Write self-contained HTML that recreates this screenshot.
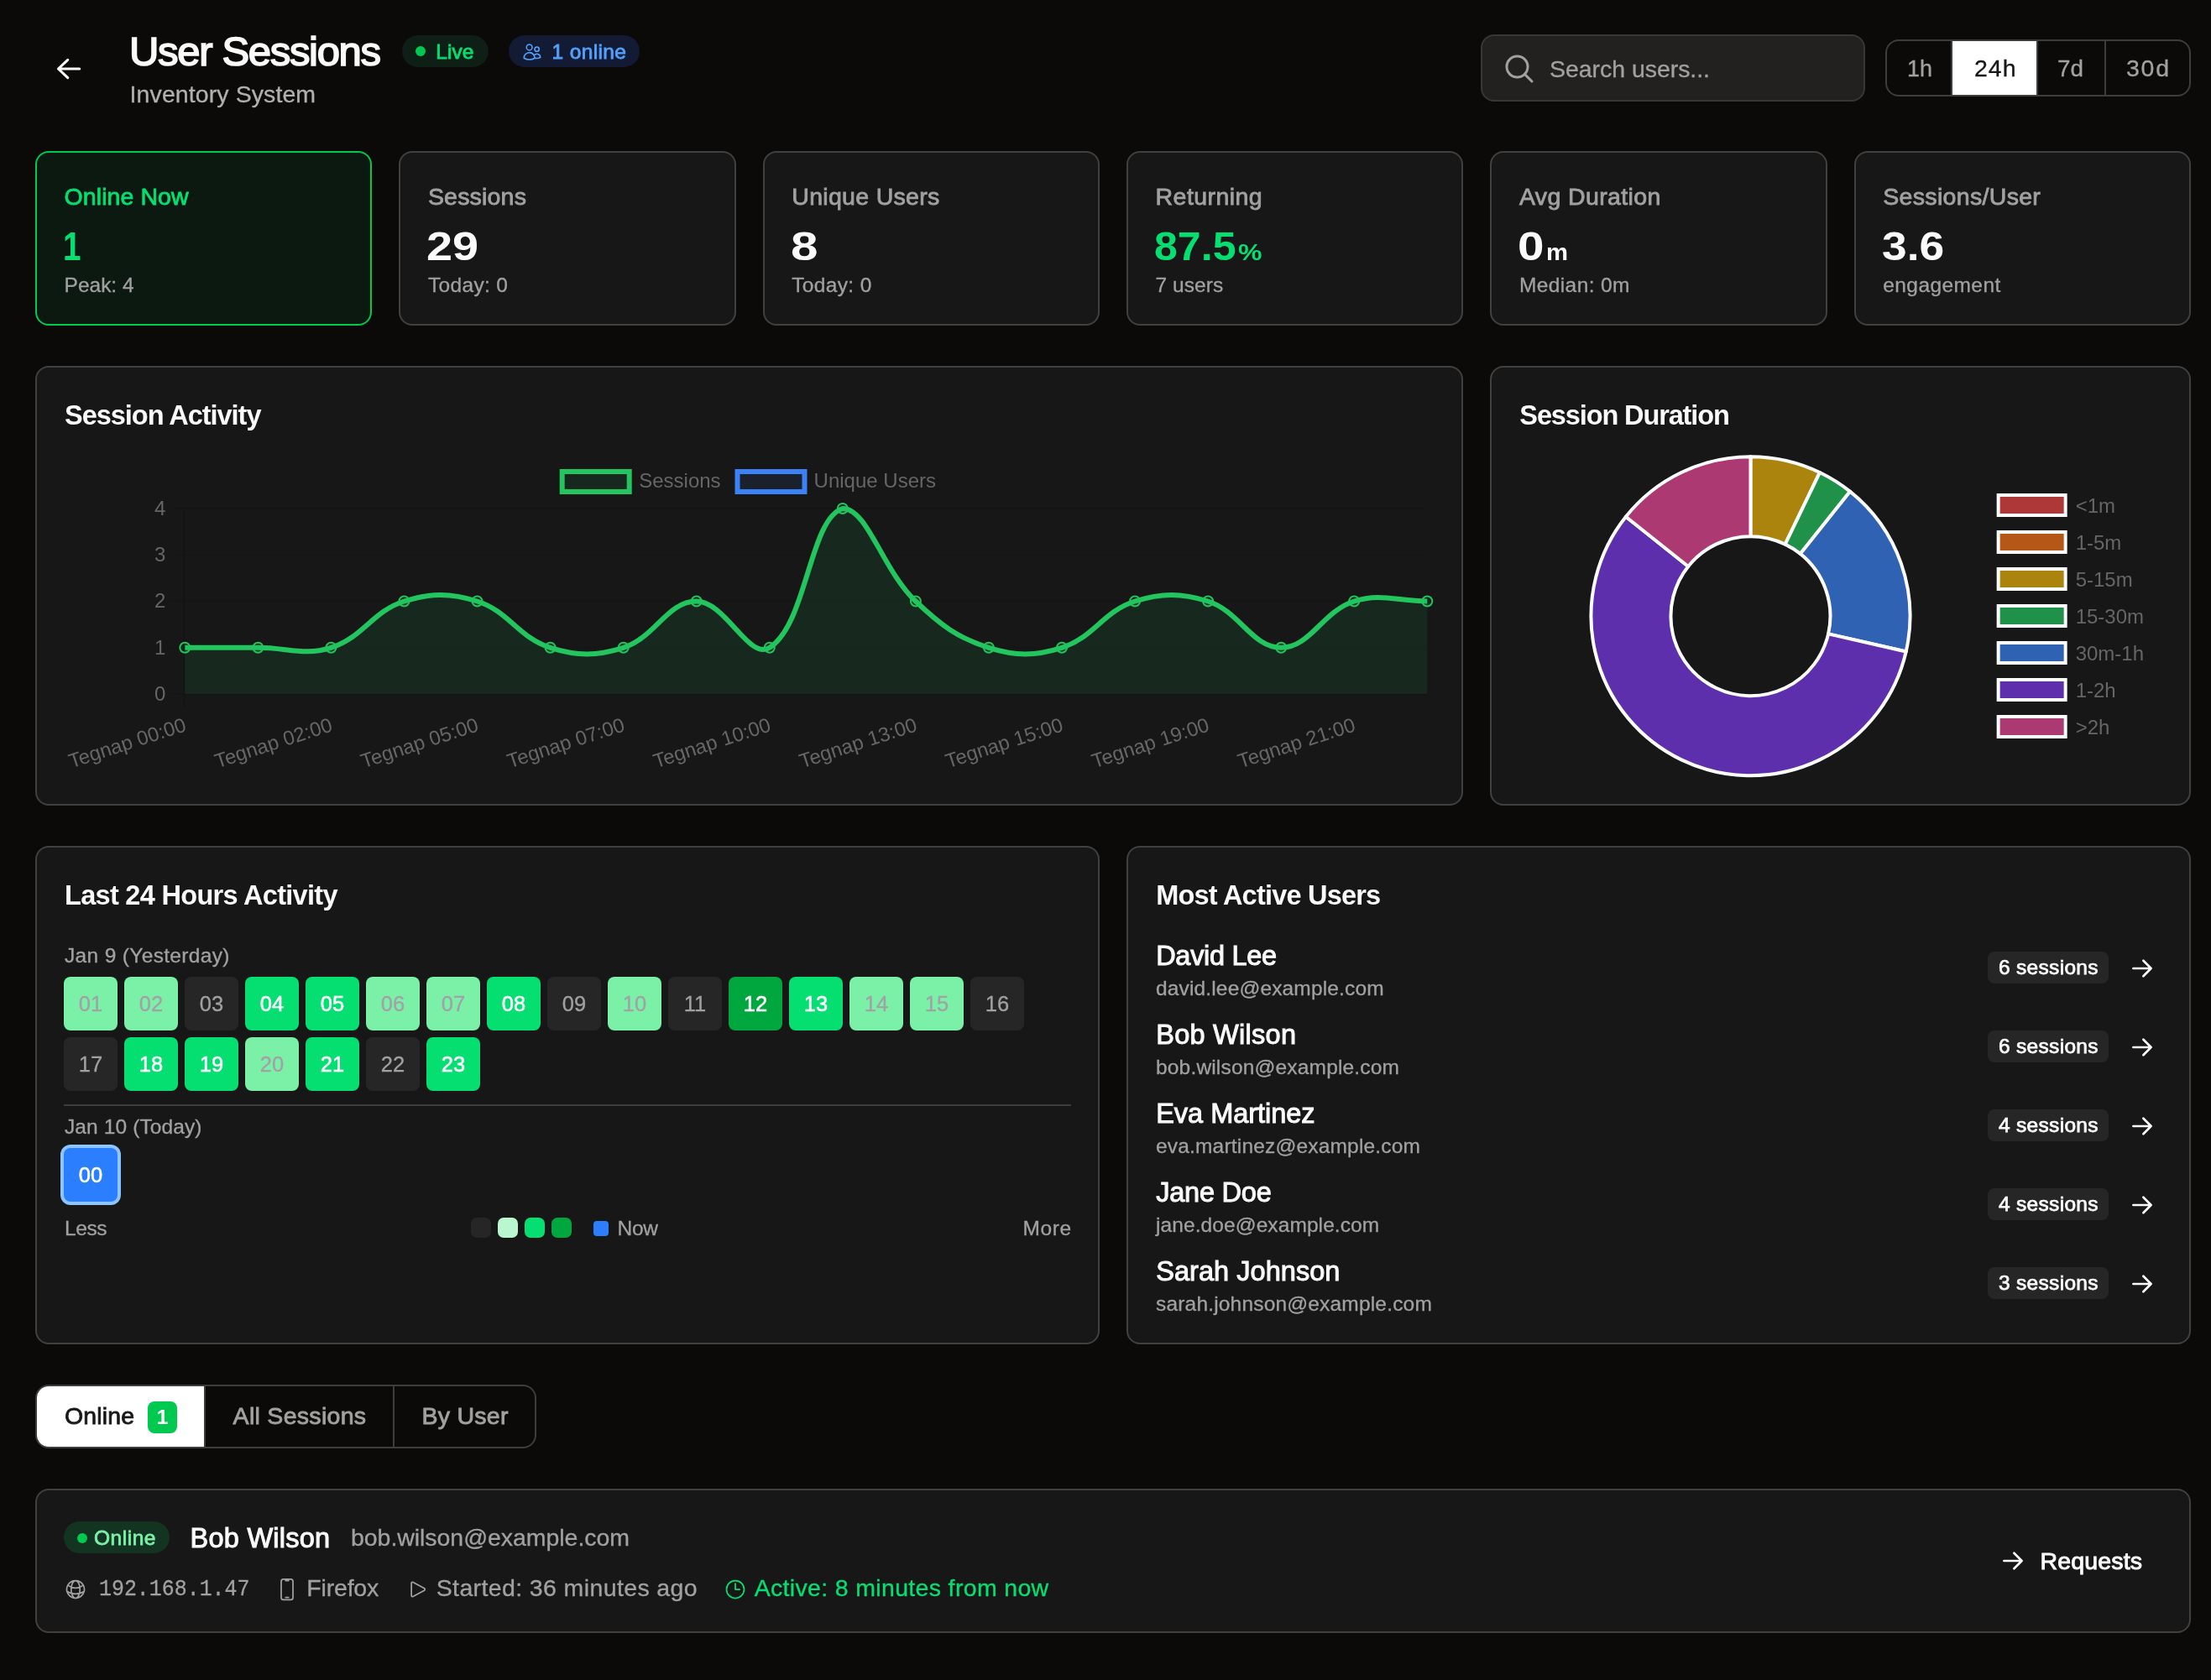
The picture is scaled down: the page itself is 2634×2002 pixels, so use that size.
<!DOCTYPE html>
<html lang="en"><head><meta charset="utf-8"><title>User Sessions</title><style>
*{box-sizing:border-box;margin:0;padding:0}
html,body{width:2634px;height:2002px;overflow:hidden;background:#0a0a0a}
body{font-family:"Liberation Sans", sans-serif;color:#fafafa;-webkit-font-smoothing:antialiased}
#page{will-change:transform;position:relative;width:2634px;height:2002px;overflow:hidden;background:#0b0a09}
.abs,.card,.pill,.dot,.cell,.seg,.search,.t{position:absolute}
.t{white-space:nowrap}
.card{background:#171717;border:2px solid #404040;border-radius:16px}
.pill{border-radius:19px}
.dot{border-radius:50%}
.cell{border-radius:8px}
.seg{border:2px solid #3d3d3d;border-radius:16px}
.search{background:#222120;border:2px solid #383736;border-radius:16px}
svg{display:block;overflow:visible}
</style></head><body><div id="page">
<header>
<svg class="abs" style="left:60px;top:62px" width="44" height="40" viewBox="60 62 44 40" fill="none" stroke="#fafafa" stroke-width="3.1" stroke-linecap="round" stroke-linejoin="round"><path d="M94.7 82H69.5M80.7 71.3 69.5 82l11.2 10.7"/></svg>
<div class="t" id="title" style="left:154.00px;top:33.80px;font-size:49px;line-height:54px;color:#fafafa;letter-spacing:-1.326px;-webkit-text-stroke:1.7px #fafafa;">User Sessions</div>
<div class="t" id="subtitle" style="left:154.60px;top:95.90px;font-size:28.5px;line-height:32px;color:#b0b0b0;letter-spacing:0.089px;-webkit-text-stroke:0.32px #b0b0b0;">Inventory System</div>
<div class="pill" style="left:479.00px;top:42.00px;width:103.00px;height:38.00px;background:#0e1f15;"></div>
<div class="dot" style="left:495.00px;top:55.00px;width:12.00px;height:12.00px;background:#00c950;"></div>
<div class="t" id="live" style="left:519.30px;top:47.80px;font-size:24.5px;line-height:27px;color:#05df72;letter-spacing:0.016px;-webkit-text-stroke:0.8px #05df72;">Live</div>
<div class="pill" style="left:606.00px;top:42.00px;width:156.00px;height:38.00px;background:#131b34;"></div>
<svg class="abs" style="left:622px;top:49.5px" width="24" height="24" viewBox="0 0 24 24" fill="none" stroke="#51a2ff" stroke-width="1.6" stroke-linecap="round" stroke-linejoin="round"><path d="M15 19.128a9.38 9.38 0 0 0 2.625.372 9.337 9.337 0 0 0 4.121-.952 4.125 4.125 0 0 0-7.533-2.493M15 19.128v-.003c0-1.113-.285-2.16-.786-3.07M15 19.128v.106A12.318 12.318 0 0 1 8.624 21c-2.331 0-4.512-.645-6.374-1.766l-.001-.109a6.375 6.375 0 0 1 11.964-3.07M12 6.375a3.375 3.375 0 1 1-6.75 0 3.375 3.375 0 0 1 6.75 0Zm8.25 2.25a2.625 2.625 0 1 1-5.25 0 2.625 2.625 0 0 1 5.25 0Z"/></svg>
<div class="t" id="online1" style="left:657.50px;top:47.80px;font-size:24.5px;line-height:27px;color:#51a2ff;letter-spacing:0.382px;-webkit-text-stroke:0.8px #51a2ff;">1 online</div>
<div class="search" style="left:1764.00px;top:41.00px;width:458.00px;height:80.00px;"></div>
<svg class="abs" style="left:1790px;top:62px" width="40" height="40" viewBox="0 0 24 24" fill="none" stroke="#a1a1a1" stroke-width="1.8" stroke-linecap="round" stroke-linejoin="round"><path d="m21 21-5.197-5.197m0 0A7.5 7.5 0 1 0 5.196 5.196a7.5 7.5 0 0 0 10.607 10.607Z"/></svg>
<div class="t" id="search" style="left:1846.00px;top:65.90px;font-size:28.5px;line-height:32px;color:#a1a1a1;letter-spacing:-0.048px;-webkit-text-stroke:0.32px #a1a1a1;">Search users...</div>
<div class="seg" style="left:2246.00px;top:47.00px;width:364.00px;height:68.00px;"></div>
<div class="abs" style="left:2326.00px;top:49.00px;width:99.50px;height:64.00px;background:#fff;"></div>
<div class="abs" style="left:2324.00px;top:49.00px;width:2.00px;height:64.00px;background:#3d3d3d;"></div>
<div class="abs" style="left:2425.50px;top:49.00px;width:2.00px;height:64.00px;background:#3d3d3d;"></div>
<div class="abs" style="left:2507.00px;top:49.00px;width:2.00px;height:64.00px;background:#3d3d3d;"></div>
<div class="t" id="r1" style="left:2272.00px;top:65.30px;font-size:28.5px;line-height:32px;color:#a1a1a1;-webkit-text-stroke:0.32px #a1a1a1;transform:scaleX(0.9463);transform-origin:0 0;">1h</div>
<div class="t" id="r2" style="left:2352.00px;top:65.30px;font-size:28.5px;line-height:32px;color:#171717;letter-spacing:0.969px;-webkit-text-stroke:0.32px #171717;">24h</div>
<div class="t" id="r3" style="left:2451.00px;top:65.30px;font-size:28.5px;line-height:32px;color:#a1a1a1;-webkit-text-stroke:0.32px #a1a1a1;transform:scaleX(0.9778);transform-origin:0 0;">7d</div>
<div class="t" id="r4" style="left:2533.00px;top:65.30px;font-size:28.5px;line-height:32px;color:#a1a1a1;letter-spacing:1.719px;-webkit-text-stroke:0.32px #a1a1a1;">30d</div>
</header>
<section>
<div class="card" style="left:42.00px;top:180.00px;width:401.33px;height:208.00px;border-color:#00c950;background:#0c1911;"></div>
<div class="t" id="sl0" style="left:76.60px;top:217.60px;font-size:28.5px;line-height:32px;color:#05df72;letter-spacing:0.075px;-webkit-text-stroke:0.85px #05df72;">Online Now</div>
<div class="t" id="sv0" style="left:75.10px;top:266.60px;font-size:47.3px;line-height:53px;color:#05df72;font-weight:700;transform:scaleX(0.8171);transform-origin:0 0;">1</div>
<div class="t" id="ss0" style="left:76.60px;top:326.20px;font-size:24.5px;line-height:27px;color:#a1a1a1;letter-spacing:-0.016px;-webkit-text-stroke:0.32px #a1a1a1;">Peak: 4</div>
<div class="card" style="left:475.33px;top:180.00px;width:401.33px;height:208.00px;"></div>
<div class="t" id="sl1" style="left:509.93px;top:217.60px;font-size:28.5px;line-height:32px;color:#a1a1a1;letter-spacing:0.192px;-webkit-text-stroke:0.85px #a1a1a1;">Sessions</div>
<div class="t" id="sv1" style="left:508.43px;top:266.60px;font-size:47.3px;line-height:53px;color:#fafafa;font-weight:700;transform:scaleX(1.1804);transform-origin:0 0;">29</div>
<div class="t" id="ss1" style="left:509.93px;top:326.20px;font-size:24.5px;line-height:27px;color:#a1a1a1;letter-spacing:0.339px;-webkit-text-stroke:0.32px #a1a1a1;">Today: 0</div>
<div class="card" style="left:908.67px;top:180.00px;width:401.33px;height:208.00px;"></div>
<div class="t" id="sl2" style="left:943.27px;top:217.60px;font-size:28.5px;line-height:32px;color:#a1a1a1;letter-spacing:0.304px;-webkit-text-stroke:0.85px #a1a1a1;">Unique Users</div>
<div class="t" id="sv2" style="left:941.77px;top:266.60px;font-size:47.3px;line-height:53px;color:#fafafa;font-weight:700;transform:scaleX(1.2352);transform-origin:0 0;">8</div>
<div class="t" id="ss2" style="left:943.27px;top:326.20px;font-size:24.5px;line-height:27px;color:#a1a1a1;letter-spacing:0.339px;-webkit-text-stroke:0.32px #a1a1a1;">Today: 0</div>
<div class="card" style="left:1342.00px;top:180.00px;width:401.33px;height:208.00px;"></div>
<div class="t" id="sl3" style="left:1376.60px;top:217.60px;font-size:28.5px;line-height:32px;color:#a1a1a1;letter-spacing:0.428px;-webkit-text-stroke:0.85px #a1a1a1;">Returning</div>
<div class="t" id="sv3" style="left:1375.10px;top:266.60px;font-size:47.3px;line-height:53px;color:#05df72;font-weight:700;transform:scaleX(1.0591);transform-origin:0 0;">87.5</div>
<div class="t" id="sx3" style="left:1475.10px;top:284.60px;font-size:28px;line-height:31px;color:#05df72;font-weight:700;transform:scaleX(1.1443);transform-origin:0 0;">%</div>
<div class="t" id="ss3" style="left:1376.60px;top:326.20px;font-size:24.5px;line-height:27px;color:#a1a1a1;letter-spacing:0.043px;-webkit-text-stroke:0.32px #a1a1a1;">7 users</div>
<div class="card" style="left:1775.33px;top:180.00px;width:401.33px;height:208.00px;"></div>
<div class="t" id="sl4" style="left:1809.93px;top:217.60px;font-size:28.5px;line-height:32px;color:#a1a1a1;letter-spacing:0.386px;-webkit-text-stroke:0.85px #a1a1a1;">Avg Duration</div>
<div class="t" id="sv4" style="left:1808.43px;top:266.60px;font-size:47.3px;line-height:53px;color:#fafafa;font-weight:700;transform:scaleX(1.1971);transform-origin:0 0;">0</div>
<div class="t" id="sx4" style="left:1842.43px;top:284.60px;font-size:28px;line-height:31px;color:#fafafa;font-weight:700;transform:scaleX(1.0439);transform-origin:0 0;">m</div>
<div class="t" id="ss4" style="left:1809.93px;top:326.20px;font-size:24.5px;line-height:27px;color:#a1a1a1;letter-spacing:0.398px;-webkit-text-stroke:0.32px #a1a1a1;">Median: 0m</div>
<div class="card" style="left:2208.67px;top:180.00px;width:401.33px;height:208.00px;"></div>
<div class="t" id="sl5" style="left:2243.27px;top:217.60px;font-size:28.5px;line-height:32px;color:#a1a1a1;letter-spacing:0.322px;-webkit-text-stroke:0.85px #a1a1a1;">Sessions/User</div>
<div class="t" id="sv5" style="left:2241.77px;top:266.60px;font-size:47.3px;line-height:53px;color:#fafafa;font-weight:700;transform:scaleX(1.1270);transform-origin:0 0;">3.6</div>
<div class="t" id="ss5" style="left:2243.27px;top:326.20px;font-size:24.5px;line-height:27px;color:#a1a1a1;letter-spacing:0.418px;-webkit-text-stroke:0.32px #a1a1a1;">engagement</div>
</section>
<section>
<div class="card" style="left:42.00px;top:436.00px;width:1701.33px;height:524.00px;"></div>
<div class="t" id="h1" style="left:77.00px;top:477.30px;font-size:32.5px;line-height:36px;color:#fafafa;font-weight:700;letter-spacing:-1.025px;">Session Activity</div>
<svg class="abs" style="left:44px;top:438px" width="1697" height="520" viewBox="44 438 1697 520" font-family="Liberation Sans, sans-serif" font-size="24" fill="#666"><path d="M203.3 827.0H1700.3M203.3 771.8H1700.3M203.3 716.5H1700.3M203.3 661.2H1700.3M203.3 606.0H1700.3" stroke="#000" stroke-opacity=".07" stroke-width="1.5" fill="none"/><path d="M219.3 606.0V843.0" stroke="#000" stroke-opacity=".12" stroke-width="2" fill="none"/><path d="M220.3 771.8C255.1 771.8 272.5 771.8 307.4 771.8C342.2 771.8 362.5 781.9 394.4 771.8C432.2 759.8 443.7 728.5 481.5 716.5C513.4 706.4 536.7 706.4 568.5 716.5C606.3 728.5 617.8 759.8 655.6 771.8C687.5 781.9 710.8 781.9 742.7 771.8C780.4 759.8 794.9 716.5 829.7 716.5C864.5 716.5 892.0 787.4 916.8 771.8C961.7 743.2 964.1 618.6 1003.8 606.0C1033.7 606.0 1050.7 678.2 1090.9 716.5C1120.3 744.5 1140.2 759.8 1177.9 771.8C1209.8 781.9 1233.1 781.9 1265.0 771.8C1302.8 759.8 1314.3 728.5 1352.1 716.5C1383.9 706.4 1407.2 706.4 1439.1 716.5C1476.9 728.5 1491.4 771.8 1526.2 771.8C1561.0 771.8 1575.5 728.5 1613.2 716.5C1645.1 706.4 1665.5 716.5 1700.3 716.5L1700.3 827.0L220.3 827.0Z" fill="rgb(34,197,94)" fill-opacity=".1"/><path d="M220.3 771.8C255.1 771.8 272.5 771.8 307.4 771.8C342.2 771.8 362.5 781.9 394.4 771.8C432.2 759.8 443.7 728.5 481.5 716.5C513.4 706.4 536.7 706.4 568.5 716.5C606.3 728.5 617.8 759.8 655.6 771.8C687.5 781.9 710.8 781.9 742.7 771.8C780.4 759.8 794.9 716.5 829.7 716.5C864.5 716.5 892.0 787.4 916.8 771.8C961.7 743.2 964.1 618.6 1003.8 606.0C1033.7 606.0 1050.7 678.2 1090.9 716.5C1120.3 744.5 1140.2 759.8 1177.9 771.8C1209.8 781.9 1233.1 781.9 1265.0 771.8C1302.8 759.8 1314.3 728.5 1352.1 716.5C1383.9 706.4 1407.2 706.4 1439.1 716.5C1476.9 728.5 1491.4 771.8 1526.2 771.8C1561.0 771.8 1575.5 728.5 1613.2 716.5C1645.1 706.4 1665.5 716.5 1700.3 716.5" fill="none" stroke="rgb(34,197,94)" stroke-width="6" stroke-linejoin="round"/><circle cx="220.3" cy="771.8" r="6" fill="rgb(34,197,94)" fill-opacity=".1" stroke="rgb(34,197,94)" stroke-width="2"/><circle cx="307.4" cy="771.8" r="6" fill="rgb(34,197,94)" fill-opacity=".1" stroke="rgb(34,197,94)" stroke-width="2"/><circle cx="394.4" cy="771.8" r="6" fill="rgb(34,197,94)" fill-opacity=".1" stroke="rgb(34,197,94)" stroke-width="2"/><circle cx="481.5" cy="716.5" r="6" fill="rgb(34,197,94)" fill-opacity=".1" stroke="rgb(34,197,94)" stroke-width="2"/><circle cx="568.5" cy="716.5" r="6" fill="rgb(34,197,94)" fill-opacity=".1" stroke="rgb(34,197,94)" stroke-width="2"/><circle cx="655.6" cy="771.8" r="6" fill="rgb(34,197,94)" fill-opacity=".1" stroke="rgb(34,197,94)" stroke-width="2"/><circle cx="742.7" cy="771.8" r="6" fill="rgb(34,197,94)" fill-opacity=".1" stroke="rgb(34,197,94)" stroke-width="2"/><circle cx="829.7" cy="716.5" r="6" fill="rgb(34,197,94)" fill-opacity=".1" stroke="rgb(34,197,94)" stroke-width="2"/><circle cx="916.8" cy="771.8" r="6" fill="rgb(34,197,94)" fill-opacity=".1" stroke="rgb(34,197,94)" stroke-width="2"/><circle cx="1003.8" cy="606.0" r="6" fill="rgb(34,197,94)" fill-opacity=".1" stroke="rgb(34,197,94)" stroke-width="2"/><circle cx="1090.9" cy="716.5" r="6" fill="rgb(34,197,94)" fill-opacity=".1" stroke="rgb(34,197,94)" stroke-width="2"/><circle cx="1177.9" cy="771.8" r="6" fill="rgb(34,197,94)" fill-opacity=".1" stroke="rgb(34,197,94)" stroke-width="2"/><circle cx="1265.0" cy="771.8" r="6" fill="rgb(34,197,94)" fill-opacity=".1" stroke="rgb(34,197,94)" stroke-width="2"/><circle cx="1352.1" cy="716.5" r="6" fill="rgb(34,197,94)" fill-opacity=".1" stroke="rgb(34,197,94)" stroke-width="2"/><circle cx="1439.1" cy="716.5" r="6" fill="rgb(34,197,94)" fill-opacity=".1" stroke="rgb(34,197,94)" stroke-width="2"/><circle cx="1526.2" cy="771.8" r="6" fill="rgb(34,197,94)" fill-opacity=".1" stroke="rgb(34,197,94)" stroke-width="2"/><circle cx="1613.2" cy="716.5" r="6" fill="rgb(34,197,94)" fill-opacity=".1" stroke="rgb(34,197,94)" stroke-width="2"/><circle cx="1700.3" cy="716.5" r="6" fill="rgb(34,197,94)" fill-opacity=".1" stroke="rgb(34,197,94)" stroke-width="2"/><rect x="669.7" y="562" width="80" height="24" fill="rgb(34,197,94)" fill-opacity=".1" stroke="rgb(34,197,94)" stroke-width="6"/><text x="761.2" y="581.4">Sessions</text><rect x="878.5" y="562" width="80" height="24" fill="rgb(59,130,246)" fill-opacity=".1" stroke="rgb(59,130,246)" stroke-width="6"/><text x="969.6" y="581.4">Unique Users</text><text x="197.3" y="834.9" text-anchor="end">0</text><text x="197.3" y="779.6" text-anchor="end">1</text><text x="197.3" y="724.4" text-anchor="end">2</text><text x="197.3" y="669.1" text-anchor="end">3</text><text x="197.3" y="613.9" text-anchor="end">4</text><text transform="translate(220.3 847.6) rotate(-18)" x="-4.3" y="22.7" text-anchor="end">Tegnap 00:00</text><text transform="translate(394.4 847.6) rotate(-18)" x="-4.3" y="22.7" text-anchor="end">Tegnap 02:00</text><text transform="translate(568.5 847.6) rotate(-18)" x="-4.3" y="22.7" text-anchor="end">Tegnap 05:00</text><text transform="translate(742.7 847.6) rotate(-18)" x="-4.3" y="22.7" text-anchor="end">Tegnap 07:00</text><text transform="translate(916.8 847.6) rotate(-18)" x="-4.3" y="22.7" text-anchor="end">Tegnap 10:00</text><text transform="translate(1090.9 847.6) rotate(-18)" x="-4.3" y="22.7" text-anchor="end">Tegnap 13:00</text><text transform="translate(1265.0 847.6) rotate(-18)" x="-4.3" y="22.7" text-anchor="end">Tegnap 15:00</text><text transform="translate(1439.1 847.6) rotate(-18)" x="-4.3" y="22.7" text-anchor="end">Tegnap 19:00</text><text transform="translate(1613.2 847.6) rotate(-18)" x="-4.3" y="22.7" text-anchor="end">Tegnap 21:00</text></svg>
<div class="card" style="left:1775.33px;top:436.00px;width:834.67px;height:524.00px;"></div>
<div class="t" id="h2" style="left:1810.33px;top:477.30px;font-size:32.5px;line-height:36px;color:#fafafa;font-weight:700;letter-spacing:-1.119px;">Session Duration</div>
<svg class="abs" style="left:1777.33px;top:438px" width="830.67" height="520" viewBox="1777.33 438 830.67 520" font-family="Liberation Sans, sans-serif" font-size="24" fill="#666"><path d="M2085.80 544.20A190 190 0 0 1 2168.24 563.02L2127.02 648.61A95 95 0 0 0 2085.80 639.20Z" fill="rgb(171,132,13)" stroke="#fff" stroke-width="4" stroke-linejoin="round"/><path d="M2168.24 563.02A190 190 0 0 1 2204.26 585.65L2145.03 659.93A95 95 0 0 0 2127.02 648.61Z" fill="rgb(31,145,73)" stroke="#fff" stroke-width="4" stroke-linejoin="round"/><path d="M2204.26 585.65A190 190 0 0 1 2271.04 776.48L2178.42 755.34A95 95 0 0 0 2145.03 659.93Z" fill="rgb(48,98,179)" stroke="#fff" stroke-width="4" stroke-linejoin="round"/><path d="M2271.04 776.48A190 190 0 1 1 1937.25 615.74L2011.53 674.97A95 95 0 1 0 2178.42 755.34Z" fill="rgb(94,47,173)" stroke="#fff" stroke-width="4" stroke-linejoin="round"/><path d="M1937.25 615.74A190 190 0 0 1 2085.80 544.20L2085.80 639.20A95 95 0 0 0 2011.53 674.97Z" fill="rgb(172,57,114)" stroke="#fff" stroke-width="4" stroke-linejoin="round"/><rect x="2381" y="590" width="80" height="24" fill="rgb(174,55,55)" stroke="#fff" stroke-width="4"/><text x="2473" y="610.6">&lt;1m</text><rect x="2381" y="634" width="80" height="24" fill="rgb(181,87,22)" stroke="#fff" stroke-width="4"/><text x="2473" y="654.6">1-5m</text><rect x="2381" y="678" width="80" height="24" fill="rgb(171,132,13)" stroke="#fff" stroke-width="4"/><text x="2473" y="698.6">5-15m</text><rect x="2381" y="722" width="80" height="24" fill="rgb(31,145,73)" stroke="#fff" stroke-width="4"/><text x="2473" y="742.6">15-30m</text><rect x="2381" y="766" width="80" height="24" fill="rgb(48,98,179)" stroke="#fff" stroke-width="4"/><text x="2473" y="786.6">30m-1h</text><rect x="2381" y="810" width="80" height="24" fill="rgb(94,47,173)" stroke="#fff" stroke-width="4"/><text x="2473" y="830.6">1-2h</text><rect x="2381" y="854" width="80" height="24" fill="rgb(172,57,114)" stroke="#fff" stroke-width="4"/><text x="2473" y="874.6">&gt;2h</text></svg>
</section>
<section>
<div class="card" style="left:42.00px;top:1008.00px;width:1268.00px;height:594.00px;"></div>
<div class="t" id="h3" style="left:77.00px;top:1049.30px;font-size:32.5px;line-height:36px;color:#fafafa;font-weight:700;letter-spacing:-0.698px;">Last 24 Hours Activity</div>
<div class="t" id="d1" style="left:77.00px;top:1124.80px;font-size:24.5px;line-height:27px;color:#a1a1a1;letter-spacing:0.336px;-webkit-text-stroke:0.32px #a1a1a1;">Jan 9 (Yesterday)</div>
<div class="cell" style="left:76.00px;top:1164.00px;width:64.00px;height:64.00px;background:#7bf1a8;"></div>
<div class="t" style="left:-392.00px;width:1000px;text-align:center;top:1182.00px;font-size:25.5px;line-height:28px;color:#a3a0a8;-webkit-text-stroke:0.32px #a3a0a8;"><span id="c1">01</span></div>
<div class="cell" style="left:148.00px;top:1164.00px;width:64.00px;height:64.00px;background:#7bf1a8;"></div>
<div class="t" style="left:-320.00px;width:1000px;text-align:center;top:1182.00px;font-size:25.5px;line-height:28px;color:#a3a0a8;-webkit-text-stroke:0.32px #a3a0a8;"><span id="c2">02</span></div>
<div class="cell" style="left:220.00px;top:1164.00px;width:64.00px;height:64.00px;background:#262626;"></div>
<div class="t" style="left:-248.00px;width:1000px;text-align:center;top:1182.00px;font-size:25.5px;line-height:28px;color:#a1a1a1;-webkit-text-stroke:0.32px #a1a1a1;"><span id="c3">03</span></div>
<div class="cell" style="left:292.00px;top:1164.00px;width:64.00px;height:64.00px;background:#05df72;"></div>
<div class="t" style="left:-176.00px;width:1000px;text-align:center;top:1182.00px;font-size:25.5px;line-height:28px;color:#fff;-webkit-text-stroke:0.55px #fff;"><span id="c4">04</span></div>
<div class="cell" style="left:364.00px;top:1164.00px;width:64.00px;height:64.00px;background:#05df72;"></div>
<div class="t" style="left:-104.00px;width:1000px;text-align:center;top:1182.00px;font-size:25.5px;line-height:28px;color:#fff;-webkit-text-stroke:0.55px #fff;"><span id="c5">05</span></div>
<div class="cell" style="left:436.00px;top:1164.00px;width:64.00px;height:64.00px;background:#7bf1a8;"></div>
<div class="t" style="left:-32.00px;width:1000px;text-align:center;top:1182.00px;font-size:25.5px;line-height:28px;color:#a3a0a8;-webkit-text-stroke:0.32px #a3a0a8;"><span id="c6">06</span></div>
<div class="cell" style="left:508.00px;top:1164.00px;width:64.00px;height:64.00px;background:#7bf1a8;"></div>
<div class="t" style="left:40.00px;width:1000px;text-align:center;top:1182.00px;font-size:25.5px;line-height:28px;color:#a3a0a8;-webkit-text-stroke:0.32px #a3a0a8;"><span id="c7">07</span></div>
<div class="cell" style="left:580.00px;top:1164.00px;width:64.00px;height:64.00px;background:#05df72;"></div>
<div class="t" style="left:112.00px;width:1000px;text-align:center;top:1182.00px;font-size:25.5px;line-height:28px;color:#fff;-webkit-text-stroke:0.55px #fff;"><span id="c8">08</span></div>
<div class="cell" style="left:652.00px;top:1164.00px;width:64.00px;height:64.00px;background:#262626;"></div>
<div class="t" style="left:184.00px;width:1000px;text-align:center;top:1182.00px;font-size:25.5px;line-height:28px;color:#a1a1a1;-webkit-text-stroke:0.32px #a1a1a1;"><span id="c9">09</span></div>
<div class="cell" style="left:724.00px;top:1164.00px;width:64.00px;height:64.00px;background:#7bf1a8;"></div>
<div class="t" style="left:256.00px;width:1000px;text-align:center;top:1182.00px;font-size:25.5px;line-height:28px;color:#a3a0a8;-webkit-text-stroke:0.32px #a3a0a8;"><span id="c10">10</span></div>
<div class="cell" style="left:796.00px;top:1164.00px;width:64.00px;height:64.00px;background:#262626;"></div>
<div class="t" style="left:328.00px;width:1000px;text-align:center;top:1182.00px;font-size:25.5px;line-height:28px;color:#a1a1a1;-webkit-text-stroke:0.32px #a1a1a1;"><span id="c11">11</span></div>
<div class="cell" style="left:868.00px;top:1164.00px;width:64.00px;height:64.00px;background:#00a63e;"></div>
<div class="t" style="left:400.00px;width:1000px;text-align:center;top:1182.00px;font-size:25.5px;line-height:28px;color:#fff;-webkit-text-stroke:0.55px #fff;"><span id="c12">12</span></div>
<div class="cell" style="left:940.00px;top:1164.00px;width:64.00px;height:64.00px;background:#05df72;"></div>
<div class="t" style="left:472.00px;width:1000px;text-align:center;top:1182.00px;font-size:25.5px;line-height:28px;color:#fff;-webkit-text-stroke:0.55px #fff;"><span id="c13">13</span></div>
<div class="cell" style="left:1012.00px;top:1164.00px;width:64.00px;height:64.00px;background:#7bf1a8;"></div>
<div class="t" style="left:544.00px;width:1000px;text-align:center;top:1182.00px;font-size:25.5px;line-height:28px;color:#a3a0a8;-webkit-text-stroke:0.32px #a3a0a8;"><span id="c14">14</span></div>
<div class="cell" style="left:1084.00px;top:1164.00px;width:64.00px;height:64.00px;background:#7bf1a8;"></div>
<div class="t" style="left:616.00px;width:1000px;text-align:center;top:1182.00px;font-size:25.5px;line-height:28px;color:#a3a0a8;-webkit-text-stroke:0.32px #a3a0a8;"><span id="c15">15</span></div>
<div class="cell" style="left:1156.00px;top:1164.00px;width:64.00px;height:64.00px;background:#262626;"></div>
<div class="t" style="left:688.00px;width:1000px;text-align:center;top:1182.00px;font-size:25.5px;line-height:28px;color:#a1a1a1;-webkit-text-stroke:0.32px #a1a1a1;"><span id="c16">16</span></div>
<div class="cell" style="left:76.00px;top:1236.00px;width:64.00px;height:64.00px;background:#262626;"></div>
<div class="t" style="left:-392.00px;width:1000px;text-align:center;top:1254.00px;font-size:25.5px;line-height:28px;color:#a1a1a1;-webkit-text-stroke:0.32px #a1a1a1;"><span id="c17">17</span></div>
<div class="cell" style="left:148.00px;top:1236.00px;width:64.00px;height:64.00px;background:#05df72;"></div>
<div class="t" style="left:-320.00px;width:1000px;text-align:center;top:1254.00px;font-size:25.5px;line-height:28px;color:#fff;-webkit-text-stroke:0.55px #fff;"><span id="c18">18</span></div>
<div class="cell" style="left:220.00px;top:1236.00px;width:64.00px;height:64.00px;background:#05df72;"></div>
<div class="t" style="left:-248.00px;width:1000px;text-align:center;top:1254.00px;font-size:25.5px;line-height:28px;color:#fff;-webkit-text-stroke:0.55px #fff;"><span id="c19">19</span></div>
<div class="cell" style="left:292.00px;top:1236.00px;width:64.00px;height:64.00px;background:#7bf1a8;"></div>
<div class="t" style="left:-176.00px;width:1000px;text-align:center;top:1254.00px;font-size:25.5px;line-height:28px;color:#a3a0a8;-webkit-text-stroke:0.32px #a3a0a8;"><span id="c20">20</span></div>
<div class="cell" style="left:364.00px;top:1236.00px;width:64.00px;height:64.00px;background:#05df72;"></div>
<div class="t" style="left:-104.00px;width:1000px;text-align:center;top:1254.00px;font-size:25.5px;line-height:28px;color:#fff;-webkit-text-stroke:0.55px #fff;"><span id="c21">21</span></div>
<div class="cell" style="left:436.00px;top:1236.00px;width:64.00px;height:64.00px;background:#262626;"></div>
<div class="t" style="left:-32.00px;width:1000px;text-align:center;top:1254.00px;font-size:25.5px;line-height:28px;color:#a1a1a1;-webkit-text-stroke:0.32px #a1a1a1;"><span id="c22">22</span></div>
<div class="cell" style="left:508.00px;top:1236.00px;width:64.00px;height:64.00px;background:#05df72;"></div>
<div class="t" style="left:40.00px;width:1000px;text-align:center;top:1254.00px;font-size:25.5px;line-height:28px;color:#fff;-webkit-text-stroke:0.55px #fff;"><span id="c23">23</span></div>
<div class="abs" style="left:76.00px;top:1316.00px;width:1200.00px;height:2.00px;background:#3d3d3d;"></div>
<div class="t" id="d2" style="left:77.00px;top:1328.80px;font-size:24.5px;line-height:27px;color:#a1a1a1;letter-spacing:0.111px;-webkit-text-stroke:0.32px #a1a1a1;">Jan 10 (Today)</div>
<div class="abs" style="left:72.00px;top:1364.00px;width:72.00px;height:72.00px;background:#8ec5ff;border-radius:12px;"></div>
<div class="cell" style="left:76.00px;top:1368.00px;width:64.00px;height:64.00px;background:#2b7fff;"></div>
<div class="t" style="left:-392.00px;width:1000px;text-align:center;top:1386.00px;font-size:25.5px;line-height:28px;color:#fff;-webkit-text-stroke:0.55px #fff;"><span id="c0">00</span></div>
<div class="t" id="less" style="left:77.00px;top:1449.80px;font-size:24.5px;line-height:27px;color:#a1a1a1;letter-spacing:-0.422px;-webkit-text-stroke:0.32px #a1a1a1;">Less</div>
<div class="abs" style="left:561.00px;top:1451.00px;width:24.00px;height:24.00px;background:#262626;border-radius:7px;"></div>
<div class="abs" style="left:593.00px;top:1451.00px;width:24.00px;height:24.00px;background:#b9f8cf;border-radius:7px;"></div>
<div class="abs" style="left:625.00px;top:1451.00px;width:24.00px;height:24.00px;background:#05df72;border-radius:7px;"></div>
<div class="abs" style="left:657.00px;top:1451.00px;width:24.00px;height:24.00px;background:#00a63e;border-radius:7px;"></div>
<div class="abs" style="left:707.00px;top:1454.50px;width:18.00px;height:18.00px;background:#2b7fff;border-radius:4px;"></div>
<div class="t" id="now" style="left:735.50px;top:1449.80px;font-size:24.5px;line-height:27px;color:#a1a1a1;letter-spacing:-0.258px;-webkit-text-stroke:0.32px #a1a1a1;">Now</div>
<div class="t" id="more" style="right:1357.44px;top:1449.80px;font-size:24.5px;line-height:27px;color:#a1a1a1;letter-spacing:0.557px;-webkit-text-stroke:0.32px #a1a1a1;">More</div>
<div class="card" style="left:1342.00px;top:1008.00px;width:1268.00px;height:594.00px;"></div>
<div class="t" id="h4" style="left:1377.20px;top:1049.30px;font-size:32.5px;line-height:36px;color:#fafafa;font-weight:700;letter-spacing:-0.786px;">Most Active Users</div>
<div class="t" id="un0" style="left:1377.20px;top:1121.00px;font-size:32.5px;line-height:36px;color:#fafafa;letter-spacing:-0.295px;-webkit-text-stroke:1.0px #fafafa;">David Lee</div>
<div class="t" id="ue0" style="left:1377.00px;top:1164.30px;font-size:24.5px;line-height:27px;color:#a1a1a1;letter-spacing:0.148px;-webkit-text-stroke:0.32px #a1a1a1;">david.lee@example.com</div>
<div class="abs" style="left:2368.00px;top:1134.00px;width:144.00px;height:38.00px;background:#262626;border-radius:8px;"></div>
<div class="t" id="us0" style="left:2381.00px;top:1139.30px;font-size:24.5px;line-height:27px;color:#fafafa;letter-spacing:0.304px;-webkit-text-stroke:0.75px #fafafa;">6 sessions</div>
<svg class="abs" style="left:2536px;top:1138px" width="32" height="32" viewBox="0 0 32 32" fill="none" stroke="#fafafa" stroke-width="2.7" stroke-linecap="round" stroke-linejoin="round"><path d="M5.4 16H26.6M17.4 6.8 26.6 16l-9.2 9.2"/></svg>
<div class="t" id="un1" style="left:1377.20px;top:1215.00px;font-size:32.5px;line-height:36px;color:#fafafa;letter-spacing:0.269px;-webkit-text-stroke:1.0px #fafafa;">Bob Wilson</div>
<div class="t" id="ue1" style="left:1377.00px;top:1258.30px;font-size:24.5px;line-height:27px;color:#a1a1a1;letter-spacing:0.174px;-webkit-text-stroke:0.32px #a1a1a1;">bob.wilson@example.com</div>
<div class="abs" style="left:2368.00px;top:1228.00px;width:144.00px;height:38.00px;background:#262626;border-radius:8px;"></div>
<div class="t" id="us1" style="left:2381.00px;top:1233.30px;font-size:24.5px;line-height:27px;color:#fafafa;letter-spacing:0.304px;-webkit-text-stroke:0.75px #fafafa;">6 sessions</div>
<svg class="abs" style="left:2536px;top:1232px" width="32" height="32" viewBox="0 0 32 32" fill="none" stroke="#fafafa" stroke-width="2.7" stroke-linecap="round" stroke-linejoin="round"><path d="M5.4 16H26.6M17.4 6.8 26.6 16l-9.2 9.2"/></svg>
<div class="t" id="un2" style="left:1377.20px;top:1309.00px;font-size:32.5px;line-height:36px;color:#fafafa;letter-spacing:-0.023px;-webkit-text-stroke:1.0px #fafafa;">Eva Martinez</div>
<div class="t" id="ue2" style="left:1377.00px;top:1352.30px;font-size:24.5px;line-height:27px;color:#a1a1a1;letter-spacing:0.181px;-webkit-text-stroke:0.32px #a1a1a1;">eva.martinez@example.com</div>
<div class="abs" style="left:2368.00px;top:1322.00px;width:144.00px;height:38.00px;background:#262626;border-radius:8px;"></div>
<div class="t" id="us2" style="left:2381.00px;top:1327.30px;font-size:24.5px;line-height:27px;color:#fafafa;letter-spacing:0.304px;-webkit-text-stroke:0.75px #fafafa;">4 sessions</div>
<svg class="abs" style="left:2536px;top:1326px" width="32" height="32" viewBox="0 0 32 32" fill="none" stroke="#fafafa" stroke-width="2.7" stroke-linecap="round" stroke-linejoin="round"><path d="M5.4 16H26.6M17.4 6.8 26.6 16l-9.2 9.2"/></svg>
<div class="t" id="un3" style="left:1377.20px;top:1403.00px;font-size:32.5px;line-height:36px;color:#fafafa;letter-spacing:-0.218px;-webkit-text-stroke:1.0px #fafafa;">Jane Doe</div>
<div class="t" id="ue3" style="left:1377.00px;top:1446.30px;font-size:24.5px;line-height:27px;color:#a1a1a1;letter-spacing:0.085px;-webkit-text-stroke:0.32px #a1a1a1;">jane.doe@example.com</div>
<div class="abs" style="left:2368.00px;top:1416.00px;width:144.00px;height:38.00px;background:#262626;border-radius:8px;"></div>
<div class="t" id="us3" style="left:2381.00px;top:1421.30px;font-size:24.5px;line-height:27px;color:#fafafa;letter-spacing:0.304px;-webkit-text-stroke:0.75px #fafafa;">4 sessions</div>
<svg class="abs" style="left:2536px;top:1420px" width="32" height="32" viewBox="0 0 32 32" fill="none" stroke="#fafafa" stroke-width="2.7" stroke-linecap="round" stroke-linejoin="round"><path d="M5.4 16H26.6M17.4 6.8 26.6 16l-9.2 9.2"/></svg>
<div class="t" id="un4" style="left:1377.20px;top:1497.00px;font-size:32.5px;line-height:36px;color:#fafafa;letter-spacing:0.047px;-webkit-text-stroke:1.0px #fafafa;">Sarah Johnson</div>
<div class="t" id="ue4" style="left:1377.00px;top:1540.30px;font-size:24.5px;line-height:27px;color:#a1a1a1;letter-spacing:0.180px;-webkit-text-stroke:0.32px #a1a1a1;">sarah.johnson@example.com</div>
<div class="abs" style="left:2368.00px;top:1510.00px;width:144.00px;height:38.00px;background:#262626;border-radius:8px;"></div>
<div class="t" id="us4" style="left:2381.00px;top:1515.30px;font-size:24.5px;line-height:27px;color:#fafafa;letter-spacing:0.304px;-webkit-text-stroke:0.75px #fafafa;">3 sessions</div>
<svg class="abs" style="left:2536px;top:1514px" width="32" height="32" viewBox="0 0 32 32" fill="none" stroke="#fafafa" stroke-width="2.7" stroke-linecap="round" stroke-linejoin="round"><path d="M5.4 16H26.6M17.4 6.8 26.6 16l-9.2 9.2"/></svg>
</section>
<section>
<div class="seg" style="left:42.00px;top:1650.00px;width:597.00px;height:76.00px;"></div>
<div class="abs" style="left:44.00px;top:1652.00px;width:199.00px;height:72.00px;background:#fff;border-radius:14px 0 0 14px;"></div>
<div class="abs" style="left:243.00px;top:1652.00px;width:2.00px;height:72.00px;background:#3d3d3d;"></div>
<div class="abs" style="left:468.00px;top:1652.00px;width:2.00px;height:72.00px;background:#3d3d3d;"></div>
<div class="t" id="tab1" style="left:77.00px;top:1671.30px;font-size:28.5px;line-height:32px;color:#171717;letter-spacing:0.122px;-webkit-text-stroke:0.85px #171717;">Online</div>
<div class="abs" style="left:176.00px;top:1670.00px;width:35.00px;height:38.00px;background:#00c950;border-radius:8px;"></div>
<div class="t" style="left:-306.50px;width:1000px;text-align:center;top:1675.20px;font-size:24.5px;line-height:27px;color:#fff;font-weight:700;"><span id="tabn">1</span></div>
<div class="t" id="tab2" style="left:277.60px;top:1671.30px;font-size:28.5px;line-height:32px;color:#a1a1a1;letter-spacing:0.297px;-webkit-text-stroke:0.85px #a1a1a1;">All Sessions</div>
<div class="t" id="tab3" style="left:502.50px;top:1671.30px;font-size:28.5px;line-height:32px;color:#a1a1a1;letter-spacing:0.273px;-webkit-text-stroke:0.85px #a1a1a1;">By User</div>
<div class="card" style="left:42.00px;top:1774.00px;width:2568.00px;height:172.00px;"></div>
<div class="pill" style="left:76.00px;top:1813.00px;width:126.00px;height:38.00px;background:#143422;"></div>
<div class="dot" style="left:92.00px;top:1826.50px;width:12.00px;height:12.00px;background:#00c950;"></div>
<div class="t" id="on2" style="left:112.00px;top:1819.00px;font-size:24.5px;line-height:27px;color:#7bf1a8;letter-spacing:0.534px;-webkit-text-stroke:0.8px #7bf1a8;">Online</div>
<div class="t" id="bw" style="left:226.60px;top:1814.60px;font-size:32.5px;line-height:36px;color:#fafafa;letter-spacing:0.236px;-webkit-text-stroke:1.05px #fafafa;">Bob Wilson</div>
<div class="t" id="bwe" style="left:418.00px;top:1816.30px;font-size:28.5px;line-height:32px;color:#a1a1a1;letter-spacing:-0.052px;-webkit-text-stroke:0.32px #a1a1a1;">bob.wilson@example.com</div>
<svg class="abs" style="left:76px;top:1880px" width="28" height="28" viewBox="0 0 24 24" fill="none" stroke="#a1a1a1" stroke-width="1.5" stroke-linecap="round" stroke-linejoin="round"><path d="M12 21a9.004 9.004 0 0 0 8.716-6.747M12 21a9.004 9.004 0 0 1-8.716-6.747M12 21c2.485 0 4.5-4.03 4.5-9S14.485 3 12 3m0 18c-2.485 0-4.5-4.03-4.5-9S9.515 3 12 3m0 0a8.997 8.997 0 0 1 7.843 4.582M12 3a8.997 8.997 0 0 0-7.843 4.582m15.686 0A11.953 11.953 0 0 1 12 10.5c-2.998 0-5.74-1.1-7.843-2.918m15.686 0A8.959 8.959 0 0 1 21 12c0 .778-.099 1.533-.284 2.253m0 0A17.919 17.919 0 0 1 12 16.5c-3.162 0-6.133-.815-8.716-2.247m0 0A9.015 9.015 0 0 1 3 12c0-1.605.42-3.113 1.157-4.418"/></svg>
<div class="t" id="ip" style="left:118.00px;top:1878.80px;font-size:27px;line-height:30px;color:#a1a1a1;font-family:'Liberation Mono', monospace;-webkit-text-stroke:0.3px #a1a1a1;transform:scaleX(0.9232);transform-origin:0 0;">192.168.1.47</div>
<svg class="abs" style="left:328px;top:1880px" width="28" height="28" viewBox="0 0 24 24" fill="none" stroke="#a1a1a1" stroke-width="1.5" stroke-linecap="round" stroke-linejoin="round"><path d="M10.5 1.5H8.25A2.25 2.25 0 0 0 6 3.75v16.5a2.25 2.25 0 0 0 2.25 2.25h7.5A2.25 2.25 0 0 0 18 20.25V3.75a2.25 2.25 0 0 0-2.25-2.25H13.5m-3 0V3h3V1.5m-3 0h3m-3 18.75h3"/></svg>
<div class="t" id="ff" style="left:365.30px;top:1875.50px;font-size:28.5px;line-height:32px;color:#a1a1a1;letter-spacing:-0.185px;-webkit-text-stroke:0.32px #a1a1a1;">Firefox</div>
<svg class="abs" style="left:484px;top:1880px" width="28" height="28" viewBox="0 0 24 24" fill="none" stroke="#a1a1a1" stroke-width="1.5" stroke-linecap="round" stroke-linejoin="round"><path d="M5.25 5.653c0-.856.917-1.398 1.667-.986l11.54 6.347a1.125 1.125 0 0 1 0 1.972l-11.54 6.347a1.125 1.125 0 0 1-1.667-.986V5.653Z"/></svg>
<div class="t" id="st" style="left:519.70px;top:1875.50px;font-size:28.5px;line-height:32px;color:#a1a1a1;letter-spacing:0.381px;-webkit-text-stroke:0.32px #a1a1a1;">Started: 36 minutes ago</div>
<svg class="abs" style="left:862px;top:1880px" width="28" height="28" viewBox="0 0 24 24" fill="none" stroke="#05df72" stroke-width="1.5" stroke-linecap="round" stroke-linejoin="round"><path d="M12 6v6h4.5m4.5 0a9 9 0 1 1-18 0 9 9 0 0 1 18 0Z"/></svg>
<div class="t" id="ac" style="left:898.70px;top:1875.50px;font-size:28.5px;line-height:32px;color:#05df72;letter-spacing:0.334px;-webkit-text-stroke:0.32px #05df72;">Active: 8 minutes from now</div>
<svg class="abs" style="left:2382px;top:1844px" width="32" height="32" viewBox="0 0 32 32" fill="none" stroke="#fafafa" stroke-width="2.7" stroke-linecap="round" stroke-linejoin="round"><path d="M5.4 16H26.6M17.4 6.8 26.6 16l-9.2 9.2"/></svg>
<div class="t" id="req" style="left:2430.60px;top:1844.40px;font-size:28.5px;line-height:32px;color:#fafafa;letter-spacing:0.156px;-webkit-text-stroke:0.95px #fafafa;">Requests</div>
</section>
</div></body></html>
